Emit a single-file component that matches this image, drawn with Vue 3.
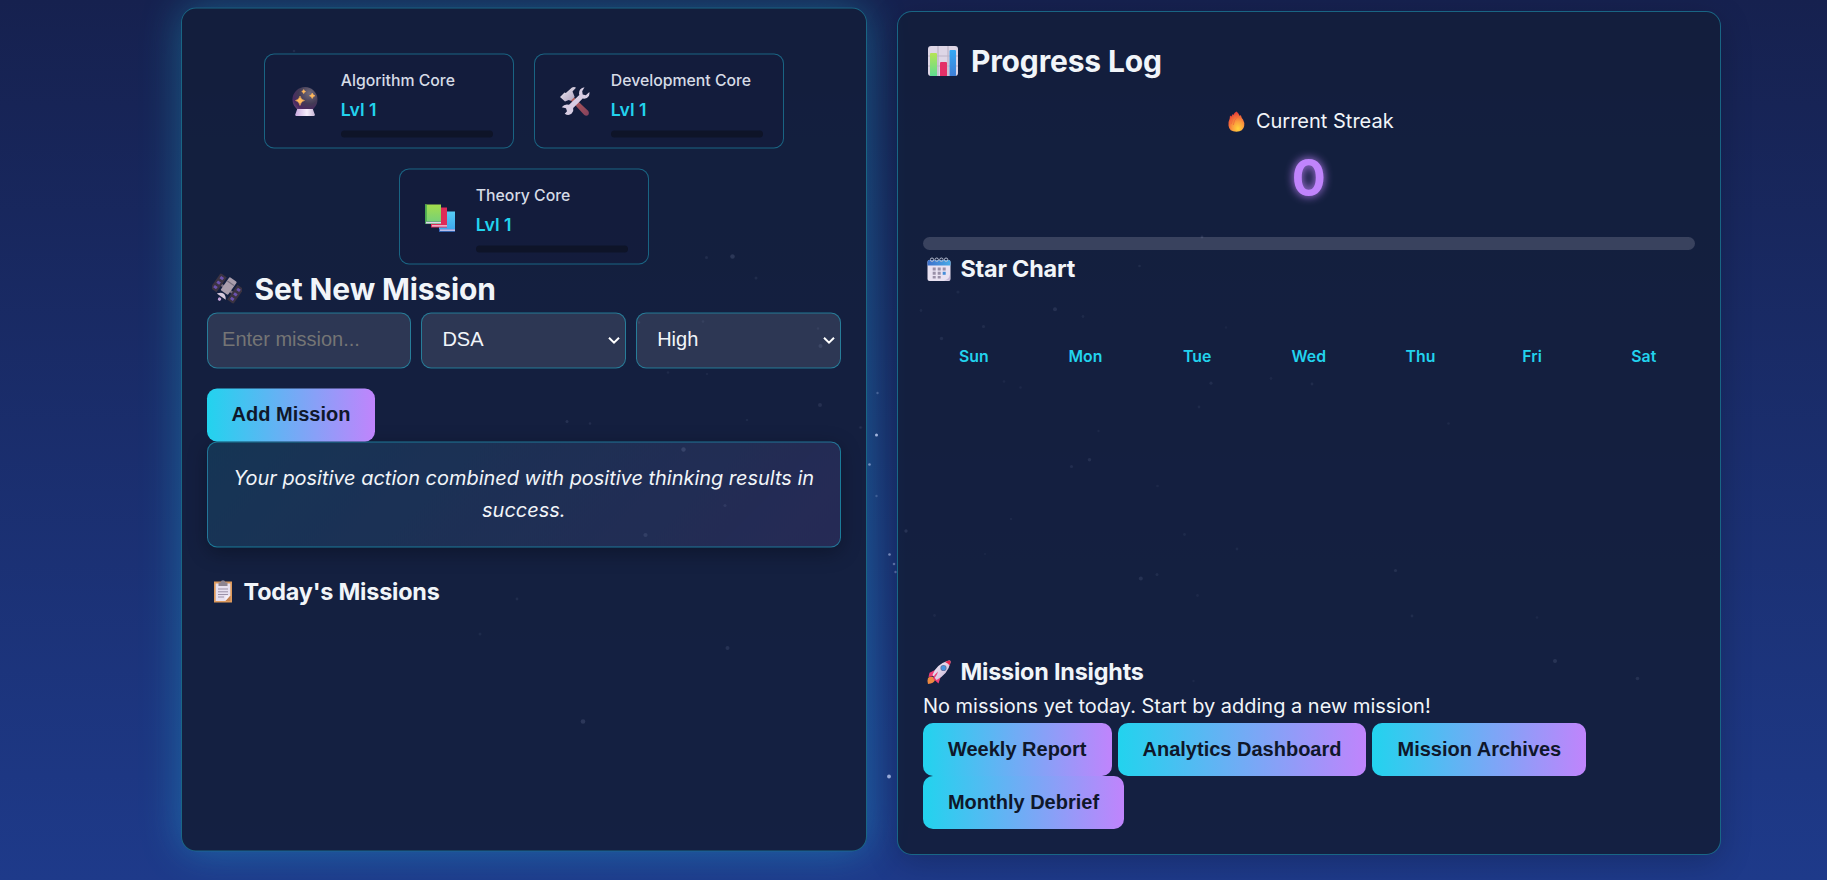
<script setup>
const cores = [
  { icon: 'orb', name: 'Algorithm Core', level: 'Lvl 1' },
  { icon: 'tools', name: 'Development Core', level: 'Lvl 1' },
  { icon: 'books', name: 'Theory Core', level: 'Lvl 1' },
]
const days = ['Sun', 'Mon', 'Tue', 'Wed', 'Thu', 'Fri', 'Sat']
const reports = ['Weekly Report', 'Analytics Dashboard', 'Mission Archives', 'Monthly Debrief']
// x, y, radius, opacity
const stars = [
  [876.5, 435, 1.5, 0.75], [869.5, 464.5, 1.3, 0.5], [877.5, 393, 1.2, 0.25], [876.5, 496, 1.2, 0.2],
  [889.5, 554.5, 1.3, 0.5], [894, 564, 1.3, 0.35], [895.5, 572, 1.2, 0.3], [889, 776.5, 1.9, 0.7],
  [732.5, 256.5, 2.3, 0.13], [706.5, 257.5, 1.5, 0.08], [756, 278, 1.5, 0.07], [294, 51, 1.3, 0.08],
  [820.5, 346, 2, 0.1], [818, 328.5, 1.2, 0.06], [703, 321.5, 1.3, 0.06], [639, 322.5, 1.3, 0.08],
  [668, 372.5, 1.3, 0.06], [707, 374, 1.3, 0.05], [820, 405, 2, 0.09], [567, 421.5, 1.5, 0.1],
  [590, 423.5, 1.3, 0.08], [747, 420, 1.3, 0.06], [861, 427.5, 1.3, 0.06], [683.5, 449.5, 2.2, 0.13],
  [580, 488, 1.4, 0.07], [725, 505.5, 1.6, 0.08], [645.5, 535, 2.1, 0.1], [517, 599, 1.4, 0.07],
  [480, 634, 1.5, 0.06], [727.5, 648, 2, 0.1], [583, 721.5, 2.3, 0.13], [1202, 237, 1.4, 0.1],
  [1139.5, 266, 1.3, 0.07], [1055, 309.3, 2, 0.1], [1083, 316.5, 1.4, 0.06], [921, 310.5, 1.4, 0.06],
  [958, 292, 1.6, 0.06], [983.5, 326.5, 1.6, 0.07], [941.5, 338.5, 1.7, 0.08], [1226, 327.5, 1.3, 0.04],
  [1004, 381.5, 1.3, 0.05], [1020.5, 387.5, 1.3, 0.05], [1098.5, 431, 1.2, 0.05], [860, 427.5, 1.2, 0.05],
  [906, 531, 1.7, 0.11], [1071.5, 466.5, 1.6, 0.08], [1089.5, 459.7, 1.8, 0.09], [1157.5, 486, 1.3, 0.05],
  [1140.8, 578.5, 2, 0.1], [1157, 574.5, 1.5, 0.07], [1184.5, 534.5, 1.4, 0.06], [1237, 549, 1.4, 0.06],
  [1197.5, 595.5, 1.4, 0.05], [934.5, 615.5, 1.4, 0.05], [1011, 519, 1.3, 0.05], [985, 554, 1.2, 0.04],
  [1199, 407, 1.4, 0.06], [1211, 383.2, 1.6, 0.08], [1271, 378.5, 1.4, 0.05], [1312, 384, 1.4, 0.07],
  [1448.5, 423.5, 1.3, 0.06], [1395.5, 570.5, 1.6, 0.09], [1412, 616, 1.4, 0.07], [1537, 617.5, 1.3, 0.05],
  [1555, 661, 2, 0.11], [1637.5, 678.5, 1.8, 0.09], [1193.5, 681, 1.2, 0.05],
]
</script>

<template>
  <div class="page">
    <main class="board">
      <section class="panel raised">
        <div class="cores">
          <article v-for="core in cores" :key="core.name" class="core">
            <svg v-if="core.icon === 'orb'" class="core-icon" viewBox="0 0 30 30">
              <defs>
                <radialGradient id="orb" cx=".68" cy=".25" r=".85"><stop offset="0" stop-color="#716c7c" /><stop offset=".5" stop-color="#433a55" /><stop offset=".8" stop-color="#4b2a61" /><stop offset="1" stop-color="#6b4a78" /></radialGradient>
                <linearGradient id="orbBase"><stop offset="0" stop-color="#c9a9df" /><stop offset=".6" stop-color="#f6eefb" /><stop offset="1" stop-color="#c6b4d4" /></linearGradient>
              </defs>
              <circle cx="15" cy="13" r="12.5" fill="url(#orb)" />
              <path d="M7.200 22.500h15.600l2 5.500q.3 1.500-1.200 1.500H6.500q-1.500 0-1.200-1.500z" fill="url(#orbBase)" />
              <path d="M10 9.500q.8 3.700 4.500 4.500q-3.700.8-4.500 5q-.8-4.200-4.500-5q3.700-.8 4.500-4.500zM22.200 6.500q.6 2.300 2.800 2.800q-2.200.5-2.800 2.800q-.6-2.300-2.800-2.800q2.200-.5 2.800-2.800zM13.700 3q.5 1.700 2 2.100q-1.500.4-2 2.100q-.5-1.700-2-2.100q1.500-.4 2-2.100z" fill="#ffb95c" stroke="#ffb95c" stroke-width=".5" />
            </svg>
            <svg v-else-if="core.icon === 'tools'" class="core-icon" viewBox="0 0 30 30">
              <defs>
                <linearGradient id="handle" x2="1" y2="1"><stop offset="0" stop-color="#b65f55" /><stop offset="1" stop-color="#85405e" /></linearGradient>
                <linearGradient id="steel" x2="1" y2="1"><stop offset="0" stop-color="#f3eff8" /><stop offset="1" stop-color="#a99bb8" /></linearGradient>
              </defs>
              <path d="M13 10l15.300 14.500q1.500 2.500 0 4q-2 1.500-4 0L10 13z" fill="url(#handle)" />
              <path d="M0 10.500L4.500 6l1.300.5L12 1q2.500-1 4 .3L12.500 5l2.200 5.500-4 3.800-2-.7L5 15z" fill="url(#steel)" />
              <path d="M24.500.8q-5.500.7-5.500 6.200l.3 1.600L9 18.200q-4.500-1.200-7.300 2.500l4.300 1 1 3-2.300 2.600q3.800 2.500 7-.2 2.300-2.400 1.500-5.600L22.700 12q4.200.8 6.200-2.500.8-1.800.5-4l-3.600 3.300-3.100-.7-.5-3.300z" fill="#d8cde3" />
            </svg>
            <svg v-else class="core-icon" viewBox="0 0 30 30">
              <defs>
                <linearGradient id="green" x2="0" y2="1"><stop offset="0" stop-color="#a4dd4c" /><stop offset="1" stop-color="#71cf7c" /></linearGradient>
                <linearGradient id="blue" x2="0" y2="1"><stop offset="0" stop-color="#57cdf5" /><stop offset="1" stop-color="#3aa3ec" /></linearGradient>
              </defs>
              <path d="M14 9h16v20H14z" fill="url(#blue)" /><path d="M14 26.500h16V29H14z" fill="#3c64c8" /><path d="M15 27h15v1.200H15z" fill="#e5dcf6" />
              <path d="M6 5h16v20H6z" fill="#de2b58" /><path d="M7 22.800h15V24H7z" fill="#efd8eb" />
              <path d="M0 2h16v19.500H0z" fill="url(#green)" /><path d="M0 2h1.800v19.500H0z" fill="#49a84e" /><path d="M0 18.500h16v3H0z" fill="#459b58" /><path d="M1 19.300h15v1.600H1z" fill="#ddd6ea" />
            </svg>
            <div class="core-body">
              <div class="core-name">{{ core.name }}</div>
              <div class="core-level">{{ core.level }}</div>
              <div class="core-bar"></div>
            </div>
          </article>
        </div>

        <h2 class="title mission-title">
          <svg class="title-icon" viewBox="0 0 30 30">
            <g transform="rotate(35 15 15)">
              <path d="M1 6h7.500v18H1z" fill="#3b3341" /><path d="M21.500 6H29v18h-7.500z" fill="#3b3341" />
              <path d="M3 8h3.500v3H3zm0 5.500h3.500v3H3zm0 5.500h3.500v3H3zM23.500 8H27v3h-3.500zm0 5.500H27v3h-3.500zm0 5.500H27v3h-3.500z" fill="#6b52ae" />
              <path d="M8.500 14h13v2.500h-13z" fill="#776b7e" /><rect x="10.500" y="4" width="9" height="16" rx="1" fill="#a99dac" /><path d="M11 8h8v1.200h-8z" fill="#776f80" />
              <path d="M9.500 25q5.500-8 11 0z" fill="#d6c9dc" /><circle cx="15" cy="28" r="1.700" fill="#c4a3d9" />
            </g>
          </svg>
          <span>Set New Mission</span>
        </h2>
        <div class="fields">
          <input class="field" placeholder="Enter mission..." />
          <div class="field select"><span>DSA</span><svg viewBox="0 0 12 8"><path d="M1 1.200l5 5 5-5" /></svg></div>
          <div class="field select"><span>High</span><svg viewBox="0 0 12 8"><path d="M1 1.200l5 5 5-5" /></svg></div>
        </div>
        <button class="btn add">Add Mission</button>
        <blockquote class="quote">Your positive action combined with positive thinking results in success.</blockquote>
        <h3 class="subtitle today">
          <svg class="sub-icon clip" viewBox="0 0 24 24">
            <path d="M3 2h18v21H3z" fill="#dd9a5c" /><path d="M4.700 4h14.600v12l-5 5.500H4.700z" fill="#e7e0f0" /><path d="M19.300 16v5.500h-5z" fill="#c68351" /><path d="M14.500 16h4.800l-5 5.500z" fill="#f5eff8" />
            <path d="M7 9.500h10M7 12.300h10M7 15h10M7 17.500h6" stroke="#9b91a8" stroke-width="1" /><path d="M7.500 3h2q.5-2.300 2.500-2.300T14.500 3h2v3.500h-9z" fill="#8d8491" />
          </svg>
          <span>Today's Missions</span>
        </h3>
      </section>

      <section class="panel">
        <h2 class="title progress-title">
          <svg class="title-icon" viewBox="0 0 30 30">
            <defs>
              <linearGradient id="barGreen" x2="0" y2="1"><stop offset="0" stop-color="#b6e455" /><stop offset="1" stop-color="#5fdc91" /></linearGradient>
              <linearGradient id="barBlue" x2="0" y2="1"><stop offset="0" stop-color="#35a9f5" /><stop offset="1" stop-color="#3f7ed5" /></linearGradient>
            </defs>
            <rect width="30" height="30" rx="3" fill="#ded6e6" /><path d="M10 0v30M20 0v30M0 10h30M0 20h30" stroke="#bdb4c7" stroke-width="1.200" />
            <path d="M2 8q0-1 1-1h5q1 0 1 1v22H2z" fill="url(#barGreen)" /><path d="M12 17q0-1 1-1h5q1 0 1 1v13h-7z" fill="#e33068" /><path d="M21.500 5q0-1 1-1h4.500q1 0 1 1v25h-6.500z" fill="url(#barBlue)" />
          </svg>
          <span>Progress Log</span>
        </h2>
        <div class="streak">
          <div class="streak-label">
            <svg class="flame" viewBox="0 0 17 21">
              <defs><radialGradient id="flame" cx=".6" cy=".85" r=".8"><stop offset="0" stop-color="#ffd43c" /><stop offset=".45" stop-color="#fb9c3c" /><stop offset="1" stop-color="#ea4038" /></radialGradient></defs>
              <path d="M8.500.5q1.800 1 3.300 4.500l1-1q.7 3 2.200 4.500 1.800 3 1.200 6.500-1 5.500-7.700 5.700Q1 20.700.5 14.500q-.3-4 1.200-7l.3-3 1.300 1 1.500-2.500.7 1Q6 1.500 8.500.5z" fill="url(#flame)" />
              <path d="M3.300 13q.5-5 3.700-8M5.300 14q.3-4.500 4-8" stroke="#f0683c" fill="none" stroke-width=".8" />
            </svg>
            <span>Current Streak</span>
          </div>
          <div class="streak-count">0</div>
        </div>
        <div class="track"></div>
        <h3 class="subtitle chart-title">
          <svg class="sub-icon" viewBox="0 0 24 24">
            <defs><linearGradient id="cal"><stop offset="0" stop-color="#3d70cb" /><stop offset="1" stop-color="#48abe8" /></linearGradient></defs>
            <rect x=".5" y="3" width="23" height="21" rx="2" fill="#e9e2f2" /><path d="M.5 8.500V5q0-2 2-2h19q2 0 2 2v3.500z" fill="url(#cal)" />
            <path d="M5.700 10.500h3v3h-3zm5 0h3v3h-3zm5 0h3v3h-3zm-10 4.300h3v3h-3zm5 0h3v3h-3zm-5 4.200h3v2.500h-3zm5 0h3v2.500h-3z" fill="#9990a8" /><path d="M15.700 14.800h3v3h-3z" fill="#468dd8" /><path d="M17 23.500q5-1 6-6v4.500q0 1.500-1.500 1.500z" fill="#c8bad9" />
            <g fill="none" stroke="#b7bed1"><circle cx="5" cy="2.700" r="1.700" /><circle cx="9.700" cy="2.700" r="1.700" /><circle cx="14.400" cy="2.700" r="1.700" /><circle cx="19.100" cy="2.700" r="1.700" /></g>
          </svg>
          <span>Star Chart</span>
        </h3>
        <div class="week"><span v-for="day in days" :key="day">{{ day }}</span></div>
        <h3 class="subtitle insight-title">
          <svg class="sub-icon" viewBox="0 0 24 24">
            <defs><linearGradient id="hull" x2="1" y2="1"><stop offset="0" stop-color="#f5edf8" /><stop offset="1" stop-color="#c7b4d3" /></linearGradient></defs>
            <path d="M1 18q2-2 5-1l2 3q-1 3.500-7 4-1-3.500 0-6z" fill="#ee8940" /><path d="M8 10L2.500 12.700 1.500 17l5-1zM14 16l-2.500 7.500-5-4.500 3-4z" fill="#ed3c76" />
            <path d="M5.500 15Q9 4.500 21 .8q3-1 2.500 1.700Q21 14 9.500 20z" fill="url(#hull)" /><path d="M18 1.900l3-1.100q3-1 2.500 1.700l-.7 3.100Q21 3 18 1.900z" fill="#e7274e" />
            <circle cx="16.500" cy="8" r="3.100" fill="#6676a5" /><circle cx="16.500" cy="8" r="2.200" fill="#4593df" /><path d="M11 11.500q-4 3-5.500 8 4-2.500 5.500-8z" fill="#ed3c76" />
          </svg>
          <span>Mission Insights</span>
        </h3>
        <p class="insight">No missions yet today. Start by adding a new mission!</p>
        <div class="reports"><button v-for="r in reports" :key="r" class="btn">{{ r }}</button></div>
      </section>
    </main>
    <svg class="stars" viewBox="0 0 1827 880">
      <circle v-for="(s, i) in stars" :key="i" :cx="s[0]" :cy="s[1]" :r="s[2]" :opacity="s[3]" />
    </svg>
  </div>
</template>

<style>
body { margin: 0; overflow: hidden; }
</style>

<style scoped>
* { box-sizing: border-box; margin: 0; }
.page { position: relative; height: 880px; overflow: hidden; font-family: Inter, sans-serif; color: #f1f5f9; background: linear-gradient(180deg, #16214f 0%, #1e3a8a 100%); }
.stars { position: absolute; inset: 0; width: 1827px; height: 880px; fill: #cfdcff; pointer-events: none; }
.board { display: grid; grid-template-columns: 1fr 1.2fr; gap: 30px; width: 1540px; margin-left: 180.600px; padding-top: 11px; }
.panel { height: 844px; padding: 25px; border: 1px solid rgba(34, 211, 238, .4); border-radius: 15px; background: rgba(20, 30, 60, .92); box-shadow: 0 8px 32px rgba(0, 0, 0, .2); }
.raised { transform: translateY(-3.500px); box-shadow: 0 0 40px rgba(34, 211, 238, .32); }
.cores { display: flex; flex-wrap: wrap; justify-content: center; gap: 20px; margin-top: 19.500px; }
.core { display: flex; align-items: center; width: 250px; height: 95.500px; padding: 15px 20px; border: 1px solid rgba(34, 211, 238, .4); border-radius: 10px; background: rgba(20, 28, 60, .75); }
.core-icon { width: 30px; height: 30px; margin: 2px 0 0 5.500px; flex: none; }
.core-body { width: 152px; margin-left: auto; padding-top: 4px; }
.core-name { font-size: 15.800px; line-height: 24px; font-weight: 550; color: #d6dbe6; }
.core-level { margin-top: 3px; font-size: 17.700px; line-height: 27px; font-weight: 600; color: #22d3ee; }
.core-bar { height: 7px; margin-top: 8px; border-radius: 4px; background: #0e1428; }
.title { display: flex; align-items: center; font-size: 30px; line-height: 48px; font-weight: 700; letter-spacing: -.150px; }
.title-icon { width: 30px; height: 30px; margin: 0 13px 0 5px; }
.fields { display: grid; grid-template-columns: repeat(3, 1fr); gap: 10px; }
.field { width: 100%; height: 56px; padding: 0 15px 3px; padding-left: 14.500px; border: 1px solid rgba(34, 211, 238, .45); border-radius: 10px; background: rgba(255, 255, 255, .11); color: #f1f5f9; font: 20px "Liberation Sans", sans-serif; }
.field::placeholder { color: #757575; }
.select { display: flex; align-items: center; justify-content: space-between; padding: 0 5px 0 20px; }
.select span { margin-top: -2px; }
.select svg { width: 12px; height: 8px; fill: none; stroke: #fff; stroke-width: 2; }
.btn { height: 53px; padding: 0 25px 1px; border: 0; border-radius: 10px; background: linear-gradient(90deg, #22d3ee, #c084fc); color: #0f172a; font: bold 20px "Liberation Sans", sans-serif; white-space: nowrap; }
.add { position: relative; z-index: 1; display: block; margin-top: 20px; }
.quote { height: 106px; padding: 19.500px 20px; border: 1px solid rgba(34, 211, 238, .45); border-radius: 10px; background: linear-gradient(135deg, rgba(34, 211, 238, .12), rgba(192, 132, 252, .11)); box-shadow: 0 5px 20px rgba(0, 0, 0, .3); font-size: 19.960px; line-height: 32px; font-style: italic; text-align: center; }
.subtitle { display: flex; align-items: center; font-size: 23.400px; line-height: 36px; font-weight: 700; letter-spacing: -.200px; }
.sub-icon { width: 24px; height: 24px; margin: 0 9.500px 0 4px; }
.clip { margin: 0 9px 0 4px; }
.today { margin-top: 26px; }
.streak { height: 138px; margin-top: 14px; padding-top: 6px; text-align: center; }
.streak-label { display: flex; justify-content: center; align-items: center; gap: 11px; font-size: 20px; line-height: 32px; }
.flame { width: 17px; height: 21px; margin-left: 4px; }
.streak-count { margin-top: 2px; font-size: 50.500px; line-height: 77px; font-weight: 700; color: #c084fc; text-shadow: 0 0 10px #c084fc; }
.track { height: 13px; border-radius: 7px; background: #39425e; }
.chart-title { margin-top: 1px; }
.week { display: grid; grid-template-columns: repeat(7, 1fr); column-gap: 10px; margin-top: 57px; text-align: center; font-size: 15.800px; line-height: 26px; font-weight: 600; color: #22d3ee; }
.insight-title { margin-top: 284px; }
.insight { font-size: 19.980px; line-height: 33px; }
.reports { display: flex; flex-wrap: wrap; column-gap: 6px; }
</style>
